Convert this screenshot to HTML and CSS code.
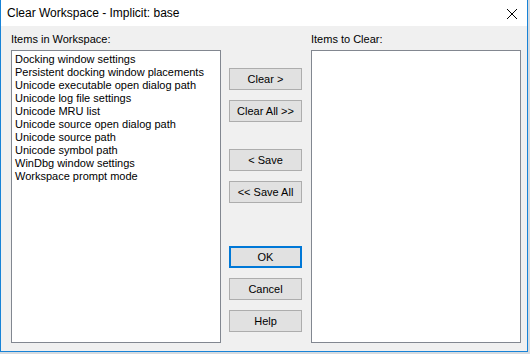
FILE: index.html
```html
<!DOCTYPE html>
<html lang="en">
<head>
  <meta charset="UTF-8">
  <title>Clear Workspace - Implicit: base</title>
  <link rel="stylesheet" href="styles.css">
</head>
<body>
  <div class="window">
    <div class="titlebar">
      <span class="title">Clear Workspace - Implicit: base</span>
      <svg class="close" width="12" height="12" viewBox="0 0 12 12">
        <path d="M1 1 L11 11 M11 1 L1 11" stroke="#000" stroke-width="1" fill="none"/>
      </svg>
    </div>
    <div class="content">
      <div class="column">
        <div class="label">Items in Workspace:</div>
        <ul class="listbox">
          <li>Docking window settings</li>
          <li>Persistent docking window placements</li>
          <li>Unicode executable open dialog path</li>
          <li>Unicode log file settings</li>
          <li>Unicode MRU list</li>
          <li>Unicode source open dialog path</li>
          <li>Unicode source path</li>
          <li>Unicode symbol path</li>
          <li>WinDbg window settings</li>
          <li>Workspace prompt mode</li>
        </ul>
      </div>
      <div class="buttons">
        <button class="btn">Clear &gt;</button>
        <button class="btn gap-small">Clear All &gt;&gt;</button>
        <button class="btn gap-medium">&lt; Save</button>
        <button class="btn gap-small">&lt;&lt; Save All</button>
        <button class="btn default gap-large">OK</button>
        <button class="btn gap-small">Cancel</button>
        <button class="btn gap-small">Help</button>
      </div>
      <div class="column">
        <div class="label">Items to Clear:</div>
        <ul class="listbox"></ul>
      </div>
    </div>
  </div>
</body>
</html>
```

FILE: styles.css
```css
body {
  margin: 0;
  width: 530px;
  height: 354px;
  background-color: #d6dbe0;
  font-family: 'Liberation Sans', Arial, sans-serif;
  font-size: 11px;
  color: #000000;
}
.window {
  width: 526px;
  height: 351px;
  background-color: #f0f0f0;
  border: 1px solid #1883d7;
  border-top: none;
  display: flex;
  flex-direction: column;
}
.titlebar {
  height: 26px;
  background-color: #ffffff;
  display: flex;
  align-items: center;
  justify-content: space-between;
  padding: 0 9px 0 6px;
  flex-shrink: 0;
}
.title {
  font-size: 12px;
  padding-bottom: 1px;
}
.close {
  margin-top: 1px;
}
.content {
  flex: 1;
  display: flex;
  padding: 7px 6px 8px 10px;
}
.column {
  display: flex;
  flex-direction: column;
  width: 210px;
}
.label {
  line-height: 13px;
  margin-bottom: 4px;
}
.listbox {
  flex: 1;
  margin: 0;
  padding: 2px 3px;
  list-style: none;
  background-color: #ffffff;
  border: 1px solid #828790;
  box-sizing: border-box;
}
.listbox li {
  line-height: 13px;
  white-space: nowrap;
}
.buttons {
  width: 73px;
  margin: 0 9px 0 8px;
  padding-top: 35px;
  display: flex;
  flex-direction: column;
}
.btn {
  height: 22px;
  width: 73px;
  background-color: #e1e1e1;
  border: 1px solid #adadad;
  font-family: 'Liberation Sans', Arial, sans-serif;
  font-size: 11px;
  color: #000000;
  padding: 0;
  box-sizing: border-box;
}
.btn.default {
  border: 2px solid #0078d7;
}
.gap-small {
  margin-top: 10px;
}
.gap-medium {
  margin-top: 27px;
}
.gap-large {
  margin-top: 43px;
}
```
